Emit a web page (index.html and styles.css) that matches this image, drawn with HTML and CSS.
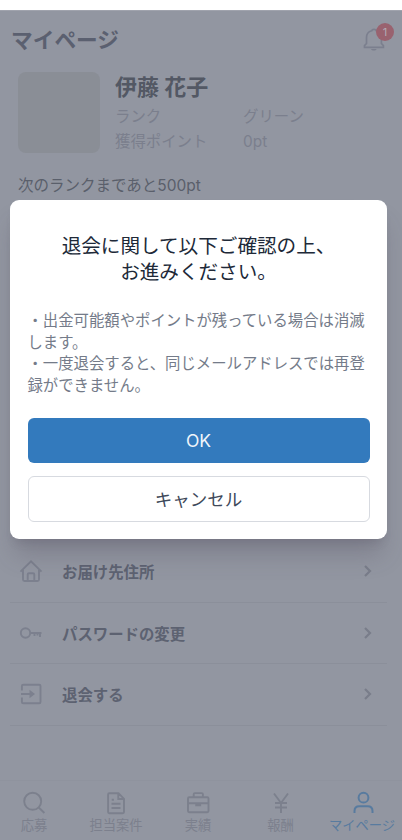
FILE: index.html
```html
<!DOCTYPE html>
<html lang="ja">
<head>
<meta charset="utf-8">
<title>マイページ</title>
<link rel="stylesheet" href="styles.css">
</head>
<body>
<div class="app">
  <header class="header">
    <h1>マイページ</h1>
    <div class="bell">
      <svg width="22" height="24" viewBox="0 0 22 24" fill="none" stroke="currentColor" stroke-width="1.7"><path d="M1.500 19.300v-1.600l2-2.200V9.700C3.500 5.700 6 3.500 8.700 2.800c.3-1.900 4.300-1.900 4.600 0C16 3.500 18.400 5.700 18.400 9.700v5.800l2 2.200v1.600z"/><path d="M8 20.900h5.600c-.8 2.200-4.800 2.200-5.600 0z" fill="currentColor" stroke="none"/></svg>
      <span class="badge">1</span>
    </div>
  </header>
  <section class="profile">
    <div class="avatar"></div>
    <div class="info">
      <h2>伊藤 花子</h2>
      <dl><dt>ランク</dt><dd>グリーン</dd><dt>獲得ポイント</dt><dd>0pt</dd></dl>
    </div>
  </section>
  <p class="next">次のランクまであと500pt</p>
  <ul class="menu">
    <li>
      <svg class="icon" width="24" height="24" viewBox="0 0 24 24" fill="none" stroke="currentColor" stroke-width="1.900"><path d="M1.500 12.700 12 2.300l10.500 10.400M4 11v9.500q0 1.500 1.500 1.500h13q1.500 0 1.500-1.500V11M8.700 22v-6.500q0-1.200 1.200-1.200h4.200q1.200 0 1.200 1.200V22"/></svg>
      <span>お届け先住所</span>
      <svg class="chevron" width="8" height="12" viewBox="0 0 8 12" fill="none" stroke="currentColor" stroke-width="2.200"><path d="m1 1 5 5-5 5"/></svg>
    </li>
    <li>
      <svg class="icon" width="24" height="24" viewBox="0 0 24 24" fill="none" stroke="currentColor" stroke-width="1.900"><circle cx="6.500" cy="12" r="4.700"/><path d="M11 12h11.500M15.500 12v3M21 12v4M18.500 12v2.500"/></svg>
      <span>パスワードの変更</span>
      <svg class="chevron" width="8" height="12" viewBox="0 0 8 12" fill="none" stroke="currentColor" stroke-width="2.200"><path d="m1 1 5 5-5 5"/></svg>
    </li>
    <li>
      <svg class="icon" width="24" height="24" viewBox="0 0 24 24" fill="none" stroke="currentColor" stroke-width="1.900"><path d="M2.900 8.500V4q0-1.300 1.300-1.300h16q1.300 0 1.300 1.300v16q0 1.300-1.300 1.300h-16q-1.300 0-1.300-1.300v-4.500M2 12h10"/><path d="m10.500 7.700 5.500 4.300-5.500 4.300z" fill="currentColor" stroke="none"/></svg>
      <span>退会する</span>
      <svg class="chevron" width="8" height="12" viewBox="0 0 8 12" fill="none" stroke="currentColor" stroke-width="2.200"><path d="m1 1 5 5-5 5"/></svg>
    </li>
  </ul>
  <nav class="tabs">
    <a><svg width="24" height="24" viewBox="0 0 24 24" fill="none" stroke="currentColor" stroke-width="1.900"><circle cx="10.700" cy="10.300" r="8.500"/><path d="m16.500 16.200 5.900 5.800"/></svg>応募</a>
    <a><svg width="24" height="24" viewBox="0 0 24 24" fill="none" stroke="currentColor" stroke-width="1.900"><path d="M14.500 2.200H5.300q-1.200 0-1.200 1.200v17.700q0 1.200 1.200 1.200h13.500q1.200 0 1.200-1.200V7.800zM14.300 2.500V8h5.500M7.500 12.800h9M7.500 17h9M7.700 8.700h2.200"/></svg>担当案件</a>
    <a><svg width="24" height="24" viewBox="0 0 24 24" fill="none" stroke="currentColor" stroke-width="1.900"><rect x="2" y="6.200" width="20.500" height="15" rx="1.200"/><path d="M7.700 6V3.300q0-1.200 1.200-1.200h6.800q1.200 0 1.200 1.200V6M2 12.200h20.500M10.200 12.500h4v1.800h-4z"/></svg>実績</a>
    <a><svg width="24" height="24" viewBox="0 0 24 24" fill="none" stroke="currentColor" stroke-width="1.900"><path d="m5 2.500 7 9.500 7-9.500M12 12v10M6 12h12M6 16.500h12"/></svg>報酬</a>
    <a class="active"><svg width="24" height="24" viewBox="0 0 24 24" fill="none" stroke="currentColor" stroke-width="2"><circle cx="13.500" cy="6.700" r="4.900"/><path d="M4.500 22v-2q0-4.800 4.800-4.800h8.400q4.800 0 4.800 4.800v2"/></svg>マイページ</a>
  </nav>
</div>
<div class="modal" role="dialog">
  <h3>退会に関して以下ご確認の上、<br>お進みください。</h3>
  <p>・出金可能額やポイントが残っている場合は消滅<br>します。<br>・一度退会すると、同じメールアドレスでは再登<br>録ができません。</p>
  <button class="primary">OK</button>
  <button class="secondary">キャンセル</button>
</div>
</body>
</html>
```
FILE: styles.css
```css
* { box-sizing: border-box; margin: 0; padding: 0; }
body { width: 402px; height: 840px; overflow: hidden; padding-top: 10px; background: #fff; font-family: Inter, "Noto Sans CJK JP", sans-serif; }
.app { height: 830px; display: flex; flex-direction: column; background: #9296a1; color: #5b606d; border-top: 1px solid #a0a3ad; }
.header { height: 60px; flex: none; display: flex; justify-content: space-between; padding: 0 7px 0 11px; }
h1 { font-size: 21.700px; line-height: 58px; font-weight: 700; color: #5b6070; }
.bell { position: relative; width: 32px; padding-top: 17px; color: #7b7f8e; }
.bell svg { display: block; }
.badge { position: absolute; left: 13px; top: 12px; width: 18px; height: 18px; border-radius: 50%; background: #99626f; color: #b2aab5; font-size: 11px; line-height: 18px; text-align: center; }
.profile { display: flex; gap: 15px; padding: 1px 18px 0; height: 92px; flex: none; }
.avatar { width: 82px; height: 81px; border-radius: 8px; background: #8a8e96; }
h2 { font-size: 22px; line-height: 30px; color: #535864; font-weight: 700; }
dl { display: grid; grid-template-columns: 128px 100px; grid-auto-rows: 25px; line-height: 25px; margin-top: 2px; font-size: 15.400px; color: #7b7f8d; }
.next { padding-left: 18px; height: 385px; flex: none; font-size: 15.500px; line-height: 24px; margin-top: 11px; margin-bottom: -18px; color: #5a5f6b; }
.menu { list-style: none; padding: 0 15px 0 10px; }
.menu li { height: 61.600px; display: flex; align-items: center; border-bottom: 1px solid #8b8f9a; padding: 0 15px 0 9px; font-size: 15.400px; font-weight: 700; color: #5d6271; }
.menu span { margin-left: 19px; flex: 1; }
.icon { color: #7c808e; }
.chevron { color: #797d8a; }
.tabs { margin-top: auto; height: 60px; border-top: 1px solid #8f939e; display: grid; grid-template-columns: 75px 82px 82px 83px 80px; color: #7c808d; padding-top: 10px; }
.tabs a { display: flex; flex-direction: column; align-items: center; font-size: 13.300px; line-height: 20px; font-weight: 400; white-space: nowrap; }
.tabs a:first-child { padding-right: 7px; }
.tabs svg { flex: none; }
.tabs .active { color: #587b9f; }
.modal { position: absolute; left: 10px; top: 199.500px; width: 377px; height: 339.500px; border-radius: 9px; background: #fff; box-shadow: 0 20px 25px -5px rgba(75, 70, 85, .28), 0 8px 10px -5px rgba(75, 70, 85, .2); padding: 33.500px 17.500px 17.500px; display: flex; flex-direction: column; }
h3 { text-align: center; font-size: 19.600px; line-height: 26px; font-weight: 400; color: #202938; white-space: nowrap; }
.modal p { margin-top: 25px; font-size: 15.370px; line-height: 21.600px; color: #747b89; white-space: nowrap; }
button { height: 45.500px; flex: none; border-radius: 6px; font: 400 17.500px Inter, "Noto Sans CJK JP", sans-serif; }
.primary { margin-top: auto; margin-bottom: 12.900px; background: #337abd; color: #f0f5fa; border: 0; }
.secondary { background: #fff; color: #40495a; border: 1px solid #d7dae0; }
```
